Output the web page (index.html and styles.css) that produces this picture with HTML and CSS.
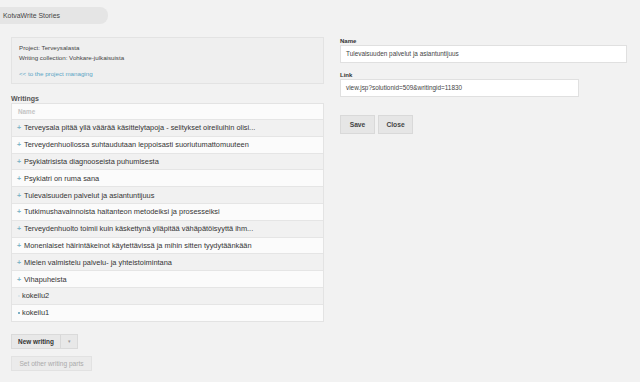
FILE: index.html
```html
<!DOCTYPE html>
<html>
<head>
<meta charset="utf-8">
<link rel="stylesheet" href="styles.css">
</head>
<body>
<div class="tab">KotvaWrite Stories</div>
<div class="main">
  <div class="left">
    <div class="info">
      <div>Project: Terveysalasta</div>
      <div>Writing collection: Vohkare-julkaisuista</div>
      <a class="back" href="#">&lt;&lt; to the project managing</a>
    </div>
    <div class="section-title">Writings</div>
    <div class="list">
      <div class="list-head">Name</div>
      <div class="row odd"><span class="plus">+</span>Terveysala pitää yllä väärää käsittelytapoja - selitykset oireiluihin olisi...</div>
      <div class="row"><span class="plus">+</span>Terveydenhuollossa suhtaudutaan leppoisasti suoriutumattomuuteen</div>
      <div class="row odd"><span class="plus">+</span>Psykiatrisista diagnooseista puhumisesta</div>
      <div class="row"><span class="plus">+</span>Psykiatri on ruma sana</div>
      <div class="row odd"><span class="plus">+</span>Tulevaisuuden palvelut ja asiantuntijuus</div>
      <div class="row"><span class="plus">+</span>Tutkimushavainnoista haitanteon metodeiksi ja prosesseiksi</div>
      <div class="row odd"><span class="plus">+</span>Terveydenhuolto toimii kuin käskettynä ylläpitää vähäpätöisyyttä ihm...</div>
      <div class="row"><span class="plus">+</span>Monenlaiset häirintäkeinot käytettävissä ja mihin sitten tyydytäänkään</div>
      <div class="row odd"><span class="plus">+</span>Mielen valmistelu palvelu- ja yhteistoimintana</div>
      <div class="row"><span class="plus">+</span>Vihapuheista</div>
      <div class="row odd"><span class="dot faint"></span>kokeilu2</div>
      <div class="row"><span class="dot"></span>kokeilu1</div>
    </div>
    <div class="actions">
      <div class="split">
        <span class="btn-main">New writing</span><span class="btn-caret">&#9662;</span>
      </div>
      <div class="btn-disabled">Set other writing parts</div>
    </div>
  </div>
  <div class="right">
    <div class="label">Name</div>
    <div class="input wide">Tulevaisuuden palvelut ja asiantuntijuus</div>
    <div class="label">Link</div>
    <div class="input narrow">view.jsp?solutionid=509&amp;writingid=11830</div>
    <div class="buttons">
      <span class="btn">Save</span><span class="btn">Close</span>
    </div>
  </div>
</div>
</body>
</html>
```
FILE: styles.css
```css
html, body {
  margin: 0;
  padding: 0;
  background: #f2f2f2;
  font-family: "Liberation Sans", Arial, sans-serif;
  color: #333;
}
.tab {
  margin-top: 7px;
  width: 105px;
  height: 17px;
  padding-left: 3px;
  background: #e5e5e5;
  border-radius: 0 8px 8px 0;
  font-size: 6.9px;
  line-height: 17px;
  color: #444;
}
.main {
  display: flex;
  padding: 13px 13px 0 11px;
  gap: 16px;
}
.left {
  width: 313px;
  flex: none;
}
.info {
  height: 47px;
  box-sizing: border-box;
  border: 1px solid #e3e3e3;
  background: #efefef;
  padding: 5px 7px;
  font-size: 6.2px;
  line-height: 10px;
  color: #444;
}
.back {
  display: block;
  margin-top: 6px;
  color: #5aa5c5;
  text-decoration: none;
}
.section-title {
  margin-top: 10px;
  font-size: 7px;
  font-weight: bold;
  color: #555;
  line-height: 9px;
}
.list {
  border: 1px solid #e3e3e3;
  background: #fafafa;
}
.list-head {
  height: 15px;
  line-height: 15px;
  padding-left: 6px;
  font-size: 6.3px;
  color: #c4c4c4;
  font-weight: bold;
  background: #fbfbfb;
}
.row {
  height: 16.8px;
  box-sizing: border-box;
  border-top: 1px solid #e5e5e5;
  padding-left: 5px;
  font-size: 7.4px;
  color: #333;
  background: #fbfbfb;
  display: flex;
  align-items: center;
  white-space: nowrap;
}
.row.odd {
  background: #f1f1f1;
}
.plus {
  width: 7px;
  color: #7fb5c8;
  font-weight: bold;
  font-size: 7px;
}
.dot {
  width: 2px;
  height: 2px;
  background: #7fb0c5;
  margin-right: 2px;
  margin-left: 1px;
}
.dot.faint {
  background: #dde6ea;
}
.actions {
  margin-top: 12px;
}
.split {
  display: flex;
  width: fit-content;
  height: 13px;
  border: 1px solid #dadada;
  background: #e8e8e8;
  font-size: 6.4px;
  line-height: 13px;
}
.btn-main {
  width: 48px;
  text-align: center;
  font-weight: bold;
  color: #333;
  border-right: 1px solid #d8d8d8;
}
.btn-caret {
  width: 16px;
  text-align: center;
  color: #999;
  font-size: 5px;
}
.btn-disabled {
  margin-top: 7px;
  width: 79px;
  height: 13px;
  border: 1px solid #e2e2e2;
  background: #ebebeb;
  color: #aaa;
  font-size: 6.6px;
  line-height: 13px;
  text-align: center;
}
.right {
  flex: 1;
}
.label {
  font-size: 6px;
  font-weight: bold;
  color: #333;
  line-height: 8px;
}
.input {
  box-sizing: border-box;
  height: 18px;
  border: 1px solid #e0e0e0;
  background: #fff;
  font-size: 6.4px;
  line-height: 16px;
  padding-left: 5px;
  color: #444;
  margin-bottom: 8px;
}
.input.wide { width: 287px; }
.input.narrow { width: 239px; }
.buttons {
  display: flex;
  gap: 3px;
  margin-top: 18px;
}
.btn {
  box-sizing: border-box;
  height: 19px;
  line-height: 17px;
  border: 1px solid #d9d9d9;
  background: #e6e6e6;
  font-size: 6.7px;
  font-weight: bold;
  color: #444;
  text-align: center;
  width: 35px;
}
```
